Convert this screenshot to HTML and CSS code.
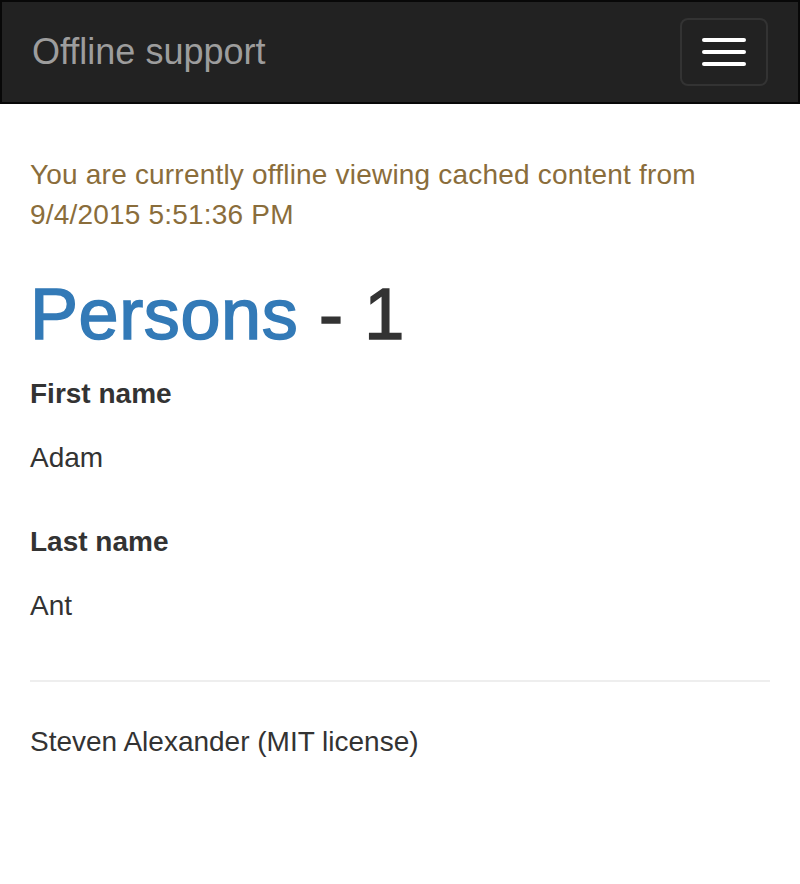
FILE: index.html
```html
<!DOCTYPE html>
<html lang="en">
<head>
<meta charset="utf-8">
<title>Offline support</title>
<link rel="stylesheet" href="styles.css">
</head>
<body>
<nav class="navbar">
  <div class="navbar-inner">
    <a class="navbar-brand" href="#">Offline support</a>
    <button class="navbar-toggle" type="button" aria-label="Toggle navigation">
      <span class="icon-bar"></span>
      <span class="icon-bar"></span>
      <span class="icon-bar"></span>
    </button>
  </div>
</nav>
<main class="container">
  <p class="text-warning">You are currently offline viewing cached content from 9/4/2015 5:51:36 PM</p>
  <h1 class="title"><a href="#" class="title-link">Persons</a> - 1</h1>
  <div class="form-group">
    <label class="field-label">First name</label>
    <p class="form-control-static">Adam</p>
  </div>
  <div class="form-group">
    <label class="field-label">Last name</label>
    <p class="form-control-static">Ant</p>
  </div>
  <hr class="divider">
  <footer class="footer">
    <p class="footer-text">Steven Alexander (MIT license)</p>
  </footer>
</main>
</body>
</html>
```

FILE: styles.css
```css
* {
  box-sizing: border-box;
}

html, body {
  margin: 0;
  padding: 0;
  background: #fff;
}

body {
  font-family: "Liberation Sans", Arial, Helvetica, sans-serif;
  font-size: 28px;
  line-height: 40px;
  color: #333;
}

.navbar {
  background: #222;
  border: 2px solid #080808;
  height: 104px;
  margin-bottom: 51px;
}

.navbar-inner {
  display: flex;
  justify-content: space-between;
  align-items: flex-start;
  padding: 0 30px 0 0;
}

.navbar-brand {
  display: block;
  height: 100px;
  padding: 30px 30px;
  font-size: 36px;
  line-height: 40px;
  color: #9d9d9d;
  text-decoration: none;
}

.navbar-toggle {
  margin-top: 16px;
  width: 88px;
  height: 68px;
  padding: 18px 20px;
  background: transparent;
  border: 2px solid #333;
  border-radius: 8px;
  display: flex;
  flex-direction: column;
  gap: 8px;
  cursor: pointer;
}

.icon-bar {
  display: block;
  width: 44px;
  height: 4px;
  background: #fff;
  border-radius: 2px;
}

.container {
  padding: 0 30px;
}

.text-warning {
  color: #8a6d3b;
  margin: 0 0 20px;
  letter-spacing: 0.2px;
}

.title {
  font-size: 72px;
  line-height: 1.1;
  font-weight: 500;
  margin: 40px 0 20px;
  color: #333;
  -webkit-text-stroke: 1.6px currentColor;
  letter-spacing: 0.6px;
}

.title-link {
  color: #337ab7;
  text-decoration: none;
}

.form-group {
  margin-bottom: 30px;
}

.field-label {
  display: block;
  font-weight: bold;
  margin-bottom: 10px;
}

.form-control-static {
  margin: 0;
  padding: 14px 0;
  min-height: 68px;
}

.divider {
  margin: 40px 0;
  border: 0;
  border-top: 2px solid #eee;
  height: 0;
}

.footer-text {
  margin: 0;
}
```
